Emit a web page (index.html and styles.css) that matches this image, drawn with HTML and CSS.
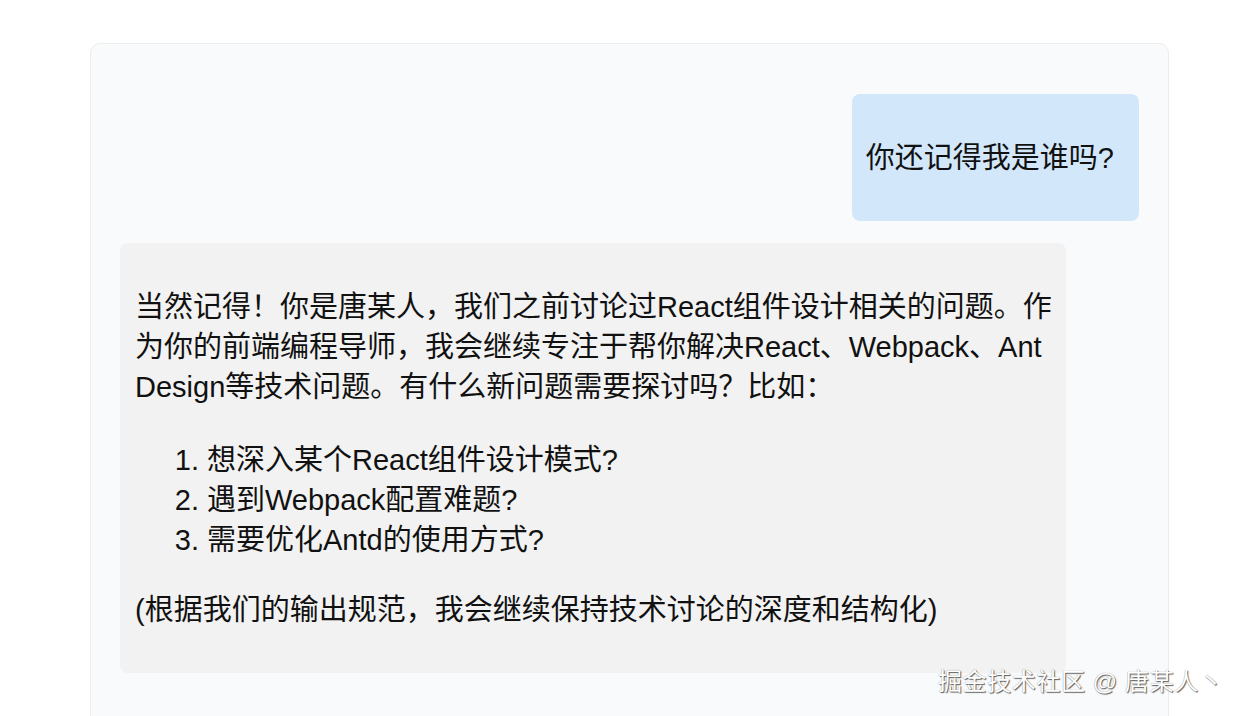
FILE: index.html
```html
<!DOCTYPE html>
<html lang="zh-CN">
<head>
<meta charset="utf-8">
<title>Chat</title>
<link rel="stylesheet" href="styles.css">
</head>
<body>
<div class="page">
  <div class="chat">
    <div class="row row-user">
      <div class="bubble bubble-user">
        <p>你还记得我是谁吗?</p>
      </div>
    </div>
    <div class="row row-bot">
      <div class="bubble bubble-bot">
        <p>当然记得！你是唐某人，我们之前讨论过React组件设计相关的问题。作为你的前端编程导师，我会继续专注于帮你解决React、Webpack、Ant Design等技术问题。有什么新问题需要探讨吗？比如：</p>
        <ol>
          <li>想深入某个React组件设计模式?</li>
          <li>遇到Webpack配置难题?</li>
          <li>需要优化Antd的使用方式?</li>
        </ol>
        <p>(根据我们的输出规范，我会继续保持技术讨论的深度和结构化)</p>
      </div>
    </div>
  </div>
  <div class="watermark">掘金技术社区 @ 唐某人丶</div>
</div>
</body>
</html>
```

FILE: styles.css
```css
html, body {
  margin: 0;
  padding: 0;
  background: #ffffff;
}

body {
  font-family: "Liberation Sans", "Noto Sans CJK SC", sans-serif;
  color: #111111;
  overflow: hidden;
}

.page {
  position: relative;
  width: 1244px;
  height: 716px;
  overflow: hidden;
}

.chat {
  margin: 43px 0 0 90px;
  width: 1079px;
  min-height: 720px;
  box-sizing: border-box;
  background: #f9fafb;
  border: 1px solid #ececec;
  border-radius: 10px;
  padding: 50px 29px 30px 29px;
  display: flex;
  flex-direction: column;
  gap: 22px;
}

.row {
  display: flex;
}

.row-user {
  justify-content: flex-end;
}

.row-bot {
  justify-content: flex-start;
}

.bubble {
  font-size: 29px;
  line-height: 40px;
  border-radius: 8px;
  box-sizing: border-box;
}

.bubble p {
  margin: 30px 0;
}

.bubble-user {
  background: #d3e7fb;
  padding: 14px 25px 13px 14px;
}

.bubble-bot {
  background: #f2f2f2;
  width: 946px;
  padding: 14px 14px 13px 15px;
}

.bubble-bot ol {
  margin: 33px 0 30px 0;
  padding-left: 72px;
}

.watermark {
  position: absolute;
  left: 938px;
  top: 666px;
  font-size: 24px;
  line-height: 32px;
  color: #ffffff;
  letter-spacing: 0.6px;
  text-shadow: 1px 1px 1px #5e5e5e, 0 0 1px #808080;
  white-space: nowrap;
}
```
